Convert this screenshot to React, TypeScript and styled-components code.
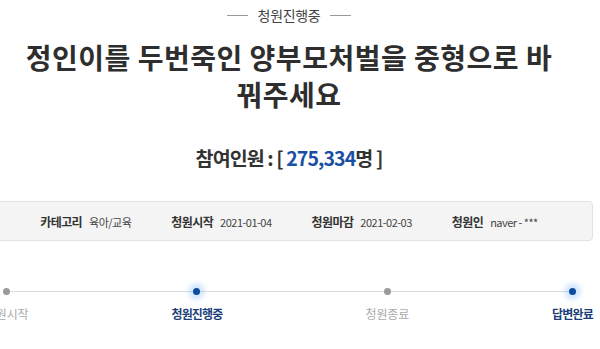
import React from "react";
import styled, { createGlobalStyle } from "styled-components";

const GlobalStyle = createGlobalStyle`
  html, body {
    margin: 0;
    padding: 0;
    background: #fff;
    overflow: hidden;
  }
  body {
    font-family: "Noto Sans CJK KR", "Noto Sans", sans-serif;
    color: #333;
  }
`;

interface IStep {
  label: string;
  active?: boolean;
}

const steps: IStep[] = [
  { label: "청원시작" },
  { label: "청원진행중", active: true },
  { label: "청원종료" },
  { label: "답변완료", active: true },
];

const info = [
  { label: "카테고리", value: "육아/교육" },
  { label: "청원시작", value: "2021-01-04" },
  { label: "청원마감", value: "2021-02-03" },
  { label: "청원인", value: "naver - ***" },
];

const App = () => {
  return (
    <>
      <GlobalStyle />
      <Page>
        <Status>청원진행중</Status>
        <Title>정인이를 두번죽인 양부모처벌을 중형으로 바꿔주세요</Title>
        <Count>
          참여인원 : [ <Number>275,334</Number>명 ]
        </Count>
        <InfoBox>
          {info.map((item) => (
            <InfoItem key={item.label}>
              <InfoLabel>{item.label}</InfoLabel>
              <InfoValue>{item.value}</InfoValue>
            </InfoItem>
          ))}
        </InfoBox>
        <Track>
          {steps.map((step) => (
            <Step key={step.label}>
              <DotWrap>
                <Dot active={step.active} />
              </DotWrap>
              <StepLabel active={step.active}>{step.label}</StepLabel>
            </Step>
          ))}
        </Track>
      </Page>
    </>
  );
};

const Page = styled.div`
  width: 608px;
  margin-left: -15px;
  display: flex;
  flex-direction: column;
  align-items: center;
`;

const Status = styled.div`
  display: flex;
  align-items: center;
  gap: 10px;
  height: 30px;
  font-size: 14px;
  color: #444;
  letter-spacing: -0.3px;

  &::before,
  &::after {
    content: "";
    width: 21px;
    height: 1px;
    background: #999;
  }
`;

const Title = styled.h1`
  width: 546px;
  margin: 9px 0 0;
  font-size: 28px;
  font-weight: 700;
  line-height: 37px;
  letter-spacing: 0.5px;
  color: #2e2e2e;
  text-align: center;
  word-break: break-all;
`;

const Count = styled.div`
  margin-top: 30px;
  font-size: 19.5px;
  font-weight: 700;
  line-height: 30px;
  letter-spacing: -0.9px;
  color: #333;
`;

const Number = styled.span`
  color: #1a4fa3;
`;

const InfoBox = styled.div`
  box-sizing: border-box;
  width: 100%;
  height: 40px;
  margin-top: 28px;
  display: flex;
  align-items: center;
  justify-content: center;
  gap: 40px;
  background: #f4f4f4;
  border: 1px solid #e2e2e2;
  border-radius: 4px;
`;

const InfoItem = styled.div`
  display: flex;
  align-items: baseline;
  gap: 7px;
`;

const InfoLabel = styled.span`
  font-size: 12px;
  font-weight: 700;
  letter-spacing: -0.6px;
  color: #333;
`;

const InfoValue = styled.span`
  font-size: 11px;
  letter-spacing: -0.5px;
  color: #444;
`;

const Track = styled.div`
  width: 100%;
  margin-top: 42px;
  display: flex;
  justify-content: space-between;
  background: linear-gradient(#dcdcdc, #dcdcdc) no-repeat;
  background-size: calc(100% - 40px) 1px;
  background-position: 20px 8px;
`;

const Step = styled.div`
  display: flex;
  flex-direction: column;
  align-items: center;
  gap: 7px;
`;

const DotWrap = styled.div`
  height: 16px;
  display: flex;
  align-items: center;
  justify-content: center;
`;

const Dot = styled.span<{ active?: boolean }>`
  width: 7px;
  height: 7px;
  border-radius: 50%;
  background: ${({ active }) => (active ? "#0d4aa0" : "#9a9a9a")};
  box-shadow: ${({ active }) =>
    active ? "0 0 4px 5px rgba(120, 180, 250, 0.3)" : "none"};
`;

const StepLabel = styled.span<{ active?: boolean }>`
  font-size: 12px;
  line-height: 16px;
  letter-spacing: ${({ active }) => (active ? "-0.8px" : "-0.2px")};
  font-weight: ${({ active }) => (active ? 700 : 400)};
  color: ${({ active }) => (active ? "#1c3f78" : "#aaa")};
`;

export default App;
